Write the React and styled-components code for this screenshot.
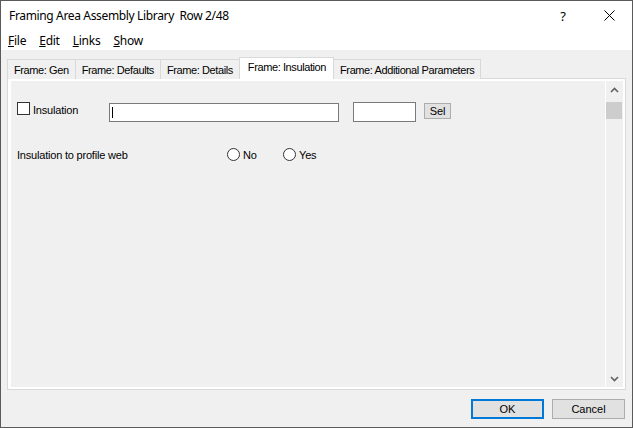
import React from "react";
import styled, { createGlobalStyle, css } from "styled-components";

const GlobalStyle = createGlobalStyle`
  html, body { margin: 0; padding: 0; background: #f0f0f0; }
  body { font-family: "Liberation Sans", Arial, sans-serif; }
  * { box-sizing: border-box; }
`;

const uiFont = `"Noto Sans", "Open Sans", sans-serif`;
const dlgFont = `"Liberation Sans", Arial, sans-serif`;

const Window = styled.div`
  width: 633px;
  height: 428px;
  border: 1px solid #5a5a5a;
  background: #f0f0f0;
  display: flex;
  flex-direction: column;
  overflow: hidden;
`;

const TitleBar = styled.div`
  height: 29px;
  flex: none;
  background: #fff;
  display: flex;
  align-items: stretch;
`;

const TitleText = styled.div`
  flex: 1;
  display: flex;
  align-items: center;
  padding-left: 8px;
  font-family: ${uiFont};
  font-size: 12px;
  letter-spacing: -0.35px;
  color: #000;
  white-space: pre;
`;

const CaptionButton = styled.div`
  width: 46px;
  display: flex;
  align-items: center;
  justify-content: center;
  font-family: ${uiFont};
  font-size: 13px;
  color: #000;
`;

const MenuBar = styled.div`
  height: 20px;
  flex: none;
  background: #fff;
  display: flex;
  align-items: center;
  padding-left: 0.5px;
`;

const MenuItem = styled.div`
  padding: 2px 6.5px 0;
  font-family: ${uiFont};
  font-size: 12px;
  letter-spacing: -0.25px;
  line-height: 20px;
  color: #000;
  u { text-decoration: underline; text-underline-offset: 1px; }
`;

const Body = styled.div`
  flex: 1;
  display: flex;
  flex-direction: column;
  padding: 7px 6px 8px 6px;
  min-height: 0;
`;

const TabStrip = styled.div`
  height: 22px;
  flex: none;
  display: flex;
  align-items: flex-end;
  margin-bottom: -1px;
  position: relative;
  z-index: 1;
  padding-left: 1px;
`;

const Tab = styled.div`
  height: 20px;
  margin-left: -1px;
  padding: 0 6px;
  border: 1px solid #d9d9d9;
  border-bottom: none;
  background: #f0f0f0;
  font-family: ${dlgFont};
  font-size: 11px;
  letter-spacing: -0.4px;
  line-height: 20px;
  color: #000;
  white-space: nowrap;
  ${(p) =>
    p.$active &&
    css`
      height: 22px;
      line-height: 19px;
      padding: 0 7px 0 8px;
      background: #fff;
      position: relative;
      z-index: 2;
    `}
`;

const Panel = styled.div`
  flex: 1;
  min-height: 0;
  border: 1px solid #d9d9d9;
  background: #fff;
  padding: 2px 2px 2px 3px;
  display: flex;
`;

const Page = styled.div`
  flex: 1;
  background: #f0f0f0;
  display: flex;
`;

const Form = styled.div`
  flex: 1;
  padding: 21px 0 0 6px;
  display: flex;
  flex-direction: column;
  font-family: ${dlgFont};
  font-size: 11px;
  letter-spacing: -0.2px;
  color: #000;
`;

const Row = styled.div`
  display: flex;
  align-items: flex-start;
`;

const CheckField = styled.div`
  width: 92px;
  display: flex;
  align-items: flex-start;
  gap: 3px;
`;

const CheckBox = styled.div`
  width: 13px;
  height: 13px;
  border: 1px solid #333;
  background: #fff;
`;

const Label = styled.div`
  line-height: 13px;
  margin-top: ${(p) => p.$top || 0}px;
  white-space: nowrap;
`;

const TextBox = styled.div`
  width: ${(p) => p.$w}px;
  height: ${(p) => p.$h}px;
  margin-top: ${(p) => p.$top || 0}px;
  margin-left: ${(p) => p.$left || 0}px;
  border: 1px solid #7a7a7a;
  background: #fff;
  display: flex;
  align-items: center;
  padding-left: 2px;
`;

const Caret = styled.span`
  width: 1px;
  height: 11px;
  background: #000;
`;

const SmallButton = styled.div`
  width: 27px;
  height: 16px;
  margin-top: 1px;
  margin-left: 8px;
  border: 1px solid #adadad;
  background: #e1e1e1;
  display: flex;
  align-items: center;
  justify-content: center;
  line-height: 14px;
`;

const OptionRow = styled.div`
  display: flex;
  align-items: center;
  margin-top: 26px;
  height: 13px;
`;

const OptionLabel = styled.div`
  width: 210px;
  white-space: nowrap;
`;

const Radio = styled.div`
  width: ${(p) => p.$w || "auto"};
  display: flex;
  align-items: center;
  gap: 3px;
`;

const RadioDot = styled.div`
  width: 13px;
  height: 13px;
  border-radius: 50%;
  border: 1px solid #333;
  background: #fff;
`;

const ScrollBar = styled.div`
  width: 18px;
  border-left: 1px solid #fff;
  display: flex;
  flex-direction: column;
  background: #f0f0f0;
`;

const ArrowButton = styled.div`
  height: 17px;
  display: flex;
  align-items: center;
  justify-content: center;
`;

const Track = styled.div`
  flex: 1;
  padding: 4px 1px 0 0;
`;

const Thumb = styled.div`
  height: 17px;
  background: #cdcdcd;
`;

const ButtonRow = styled.div`
  height: 20px;
  margin-top: 9px;
  flex: none;
  display: flex;
  justify-content: flex-end;
  gap: 8px;
  padding-right: 1px;
`;

const DialogButton = styled.div`
  width: 73px;
  height: 20px;
  background: #e1e1e1;
  border: ${(p) => (p.$default ? "2px solid #0078d7" : "1px solid #adadad")};
  display: flex;
  align-items: center;
  justify-content: center;
  font-family: ${dlgFont};
  font-size: 11px;
  color: #000;
`;

const Chevron = ({ up }) => (
  <svg width="9" height="6" viewBox="0 0 9 6">
    <polyline
      points={up ? "1,5 4.5,1.5 8,5" : "1,1 4.5,4.5 8,1"}
      fill="none"
      stroke="#606060"
      strokeWidth="1.6"
    />
  </svg>
);

const CloseGlyph = () => (
  <svg width="11" height="11" viewBox="0 0 11 11">
    <path d="M0.5 0.5 L10.5 10.5 M10.5 0.5 L0.5 10.5" stroke="#000" strokeWidth="1" />
  </svg>
);

const tabs = [
  "Frame: Gen",
  "Frame: Defaults",
  "Frame: Details",
  "Frame: Insulation",
  "Frame: Additional Parameters",
];

const menus = [
  ["F", "ile"],
  ["E", "dit"],
  ["L", "inks"],
  ["S", "how"],
];

export default function App() {
  return (
    <>
      <GlobalStyle />
      <Window>
        <TitleBar>
          <TitleText>{"Framing Area Assembly Library  Row 2/48"}</TitleText>
          <CaptionButton>?</CaptionButton>
          <CaptionButton>
            <CloseGlyph />
          </CaptionButton>
        </TitleBar>
        <MenuBar>
          {menus.map(([k, rest]) => (
            <MenuItem key={k}>
              <u>{k}</u>
              {rest}
            </MenuItem>
          ))}
        </MenuBar>
        <Body>
          <TabStrip>
            {tabs.map((t, i) => (
              <Tab key={t} $active={i === 3}>
                {t}
              </Tab>
            ))}
          </TabStrip>
          <Panel>
            <Page>
              <Form>
                <Row>
                  <CheckField>
                    <CheckBox />
                    <Label $top={2}>Insulation</Label>
                  </CheckField>
                  <TextBox $w={230} $h={19} $top={1}>
                    <Caret />
                  </TextBox>
                  <TextBox $w={63} $h={20} $left={14} />
                  <SmallButton>Sel</SmallButton>
                </Row>
                <OptionRow>
                  <OptionLabel>Insulation to profile web</OptionLabel>
                  <Radio $w="56px">
                    <RadioDot />
                    No
                  </Radio>
                  <Radio>
                    <RadioDot />
                    Yes
                  </Radio>
                </OptionRow>
              </Form>
              <ScrollBar>
                <ArrowButton>
                  <Chevron up />
                </ArrowButton>
                <Track>
                  <Thumb />
                </Track>
                <ArrowButton>
                  <Chevron />
                </ArrowButton>
              </ScrollBar>
            </Page>
          </Panel>
          <ButtonRow>
            <DialogButton $default>OK</DialogButton>
            <DialogButton>Cancel</DialogButton>
          </ButtonRow>
        </Body>
      </Window>
    </>
  );
}
